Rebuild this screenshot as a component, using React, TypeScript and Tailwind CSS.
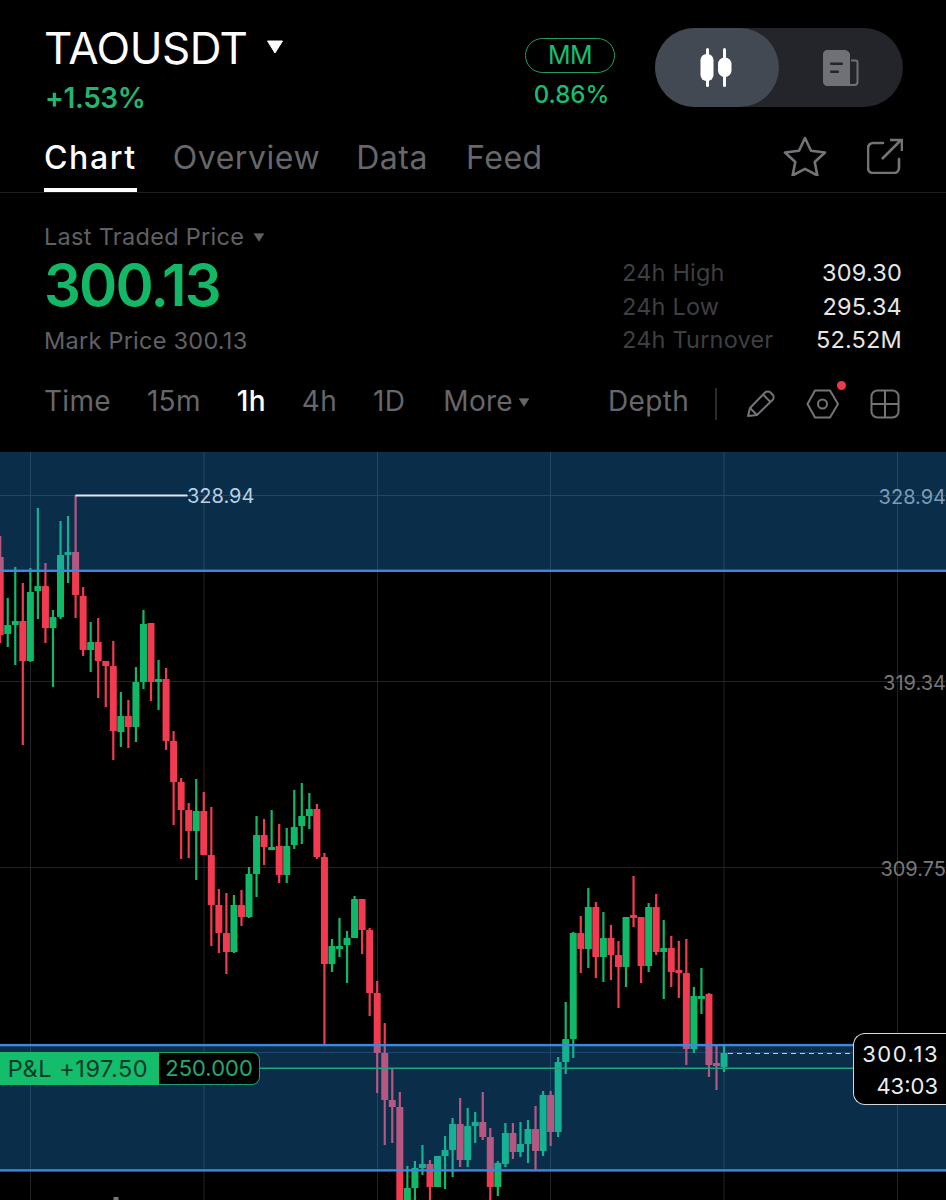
const font = "[font-family:Inter,'Noto_Sans',sans-serif]";

// wick top, wick bottom, body top, body bottom, colour
type Candle = [number, number, number, number, "r" | "g"];

const candles: Candle[] = [
  [536, 643, 557, 635, "r"], [598, 647, 625, 634, "g"], [567, 665, 621, 625, "g"], [583, 745, 621, 661, "r"],
  [568, 662, 592, 661, "g"], [508, 619, 586, 591, "g"], [563, 643, 586, 628, "r"], [610, 687, 617, 628, "g"],
  [521, 619, 555, 617, "g"], [516, 583, 552, 555, "g"], [495, 618, 552, 595, "r"], [587, 656, 596, 650, "r"],
  [622, 672, 642, 650, "g"], [618, 698, 642, 661, "r"], [661, 707, 661, 666, "r"], [641, 760, 666, 731, "r"],
  [692, 747, 716, 732, "g"], [700, 748, 716, 727, "r"], [667, 742, 682, 727, "g"], [610, 689, 624, 682, "g"],
  [623, 701, 623, 682, "r"], [660, 710, 679, 682, "g"], [668, 750, 679, 741, "r"], [731, 825, 741, 782, "r"],
  [778, 859, 782, 810, "r"], [803, 858, 810, 831, "r"], [779, 880, 811, 831, "g"], [792, 855, 811, 855, "r"],
  [807, 946, 855, 905, "r"], [889, 953, 905, 933, "r"], [893, 974, 933, 952, "r"], [895, 953, 905, 952, "g"],
  [890, 926, 905, 917, "r"], [867, 918, 874, 917, "g"], [816, 897, 835, 874, "g"], [819, 865, 835, 847, "r"],
  [810, 849, 847, 849, "g"], [824, 883, 846, 875, "r"], [828, 883, 846, 875, "g"], [790, 849, 827, 845, "g"],
  [783, 844, 816, 826, "g"], [793, 829, 809, 816, "g"], [804, 859, 809, 857, "r"], [853, 1045, 857, 964, "r"],
  [939, 972, 946, 964, "g"], [918, 957, 946, 947, "g"], [931, 983, 938, 945, "g"], [896, 938, 899, 938, "g"],
  [899, 954, 899, 930, "r"], [928, 1016, 930, 993, "r"], [981, 1093, 993, 1053, "r"], [1023, 1145, 1053, 1100, "r"],
  [1069, 1143, 1100, 1107, "r"], [1092, 1200, 1107, 1200, "r"], [1166, 1200, 1188, 1200, "g"], [1161, 1200, 1168, 1188, "g"],
  [1145, 1175, 1164, 1168, "g"], [1160, 1200, 1164, 1187, "r"], [1156, 1187, 1156, 1187, "g"], [1136, 1189, 1150, 1156, "g"],
  [1118, 1177, 1124, 1150, "g"], [1098, 1167, 1124, 1160, "r"], [1108, 1167, 1126, 1160, "g"], [1112, 1143, 1122, 1126, "g"],
  [1092, 1140, 1122, 1137, "r"], [1128, 1200, 1137, 1187, "r"], [1161, 1196, 1163, 1187, "g"], [1123, 1167, 1133, 1164, "g"],
  [1123, 1159, 1133, 1152, "r"], [1122, 1157, 1144, 1152, "g"], [1120, 1163, 1129, 1144, "g"], [1106, 1170, 1129, 1151, "r"],
  [1091, 1156, 1095, 1151, "g"], [1091, 1146, 1095, 1132, "r"], [1057, 1137, 1062, 1132, "g"], [1002, 1074, 1039, 1062, "g"],
  [932, 1058, 933, 1039, "g"], [916, 973, 933, 949, "r"], [888, 968, 907, 949, "g"], [902, 978, 907, 957, "r"],
  [912, 982, 938, 957, "g"], [925, 980, 938, 955, "r"], [941, 1008, 955, 967, "r"], [917, 987, 917, 967, "g"],
  [876, 927, 915, 917, "r"], [917, 983, 917, 966, "r"], [903, 972, 907, 966, "g"], [894, 955, 907, 952, "r"],
  [920, 999, 948, 952, "g"], [936, 987, 948, 972, "r"], [941, 998, 970, 972, "r"], [939, 1065, 973, 1049, "r"],
  [987, 1053, 996, 1049, "g"], [968, 1014, 996, 998, "g"], [993, 1077, 994, 1065, "r"], [1046, 1090, 1063, 1064, "r"],
  [1044, 1072, 1053, 1067, "g"],
];

function Triangle({ className }: { className: string }) {
  return (
    <svg viewBox="0 0 18 14" className={className}>
      <path d="M1.5 1h15L9 13z" fill="currentColor" stroke="currentColor" strokeLinejoin="round" />
    </svg>
  );
}

function CandleIcon() {
  return (
    <svg width="34" height="40" viewBox="0 0 34 40" fill="white">
      <rect x="6" y="0" width="3" height="39" rx="1.5" />
      <rect x="0.5" y="6" width="13" height="27" rx="6" />
      <rect x="23" y="0" width="3" height="39" rx="1.5" />
      <rect x="18" y="9.5" width="13.5" height="19.5" rx="6.5" />
    </svg>
  );
}

function NewsIcon() {
  return (
    <svg width="36" height="36" viewBox="0 0 36 36" fill="none">
      <path d="M4 0h17c3 0 6 2 6 5v31H4c-2 0-4-2-4-4V4c0-2 2-4 4-4z" fill="#6f7177" />
      <path d="M28 10.500h5a1.500 1.500 0 0 1 1.500 1.500v20c0 2-1.500 3-3 3H27" stroke="#6f7177" strokeWidth="2" />
      <rect x="7" y="12.500" width="13" height="2.500" rx="1" fill="#23252a" />
      <rect x="7" y="20.500" width="9" height="2.500" rx="1" fill="#23252a" />
    </svg>
  );
}

function Chart() {
  const grid = "#222326";
  return (
    <svg viewBox="0 452 946 748" className="block h-full w-full">
      {[30, 203.5, 377, 550, 723.5, 897].map((x) => (
        <rect key={x} x={x} y={452} width={1} height={748} fill={grid} />
      ))}
      {[495, 681, 867, 1052].map((y) => (
        <rect key={y} x={0} y={y} width={946} height={1} fill={grid} />
      ))}
      {candles.map(([wt, wb, bt, bb, c], i) => {
        const x = i * 7.54 + 0.2;
        const fill = c === "r" ? "#f23b50" : "#10b968";
        return (
          <g key={i} fill={fill}>
            <rect x={x - 1.1} y={wt} width={2.2} height={wb - wt} />
            <rect x={x - 3.5} y={bt} width={7} height={Math.max(bb - bt, 3)} rx={0.6} />
          </g>
        );
      })}
      <rect x={113.5} y={1197} width={5} height={3} fill="#777" />
      <rect x={0} y={452} width={946} height={118} fill="#24a0ff" fillOpacity={0.29} />
      <rect x={0} y={1045} width={946} height={126} fill="#24a0ff" fillOpacity={0.29} />
      <rect x={0} y={569.6} width={946} height={2.4} fill="#3f87dc" />
      <rect x={0} y={1043.9} width={946} height={2.4} fill="#3f87dc" />
      <rect x={0} y={1169.2} width={946} height={2.4} fill="#3f87dc" />
      <rect x={0} y={1067.5} width={860} height={1.5} fill="#1fa47c" />
      <path d="M728 1053.5H854" stroke="#b7cad8" strokeWidth={1} strokeDasharray="5 4" />
      <rect x={75.5} y={494.5} width={112} height={2} fill="#dbe8f2" />
    </svg>
  );
}

function Stat({ label, value }: { label: string; value: string }) {
  return (
    <div className="flex h-[33.5px] items-center justify-between">
      <span className="text-[#3e3f43]">{label}</span>
      <span className="text-[#e4e5e7]">{value}</span>
    </div>
  );
}

export default function App() {
  return (
    <div className={`${font} h-[1200px] w-[946px] overflow-hidden bg-black text-white`}>
      {/* symbol row */}
      <div className="flex h-[135px] pr-[43px] pl-[44px]">
        <div className="flex-1">
          <div className="flex h-[88px] items-center pt-[7px]">
            <span className="text-[44px] leading-none tracking-[-0.5px]">TAOUSDT</span>
            <Triangle className="mt-[-1px] ml-[18px] h-[14px] w-[20px] text-white" />
          </div>
          <div className="mt-[-6px] ml-[1px] text-[28px] leading-[32px] font-semibold tracking-[-0.4px] text-[#26b56f]">+1.53%</div>
        </div>
        <div className="mt-[38px] mr-[40px] flex w-[90px] flex-col items-center">
          <div className="flex h-[35px] w-[90px] items-center justify-center rounded-full border border-[#1f9f66] text-[25px] tracking-[-0.5px] text-[#17bd72]">
            MM
          </div>
          <div className="mt-[7px] ml-[3px] text-[24px] leading-[30px] font-medium text-[#17bd72]">0.86%</div>
        </div>
        <div className="mt-[28px] flex h-[79px] w-[248px] rounded-full bg-[#23252a]">
          <div className="flex w-[124px] items-center justify-center rounded-full bg-[#434952]">
            <CandleIcon />
          </div>
          <div className="flex flex-1 items-center justify-center">
            <NewsIcon />
          </div>
        </div>
      </div>

      {/* tabs */}
      <div className="flex h-[58px] items-start justify-between border-b border-[#1f1f21] pr-[43px] pl-[44px]">
        <div className="flex gap-[36px] text-[32px] leading-[46px] tracking-[0.55px] text-[#66676b]">
          <div className="h-[57px] border-b-4 border-white font-medium tracking-[1.6px] text-white">Chart</div>
          <div>Overview</div>
          <div>Data</div>
          <div className="ml-[2px]">Feed</div>
        </div>
        <div className="flex items-center gap-[40px] pt-[1px] text-[#737478]">
          <svg width="44" height="40" viewBox="0 0 44 40" fill="none" stroke="currentColor" strokeWidth="2.6" strokeLinejoin="round">
            <path d="M22 2l6 12.800 14 1.700-10.300 9.500 2.700 13.500L22 32.800 9.600 39.500l2.700-13.500L2 16.500l14-1.700z" />
          </svg>
          <svg width="36" height="36" viewBox="0 0 36 36" fill="none" stroke="currentColor" strokeWidth="2.6" strokeLinecap="round">
            <path d="M16 5H6a5 5 0 0 0-5 5v20a5 5 0 0 0 5 5h21a5 5 0 0 0 5-5V21" />
            <path d="M15 21L34 2M23 2h12v11" strokeLinecap="butt" />
          </svg>
        </div>
      </div>

      {/* price summary */}
      <div className="flex h-[170px] pt-[29px] pr-[44px] pl-[44px]">
        <div className="flex-1">
          <div className="flex items-center text-[23.5px] leading-[30px] tracking-[0.3px] text-[#606165]">
            Last Traded Price
            <Triangle className="ml-[9px] h-[9px] w-[12px] text-[#606165]" />
          </div>
          <div className="mt-[-2px] text-[58px] leading-[70px] font-semibold tracking-[-1.8px] text-[#12b866]">300.13</div>
          <div className="mt-[5px] text-[23.5px] leading-[32px] tracking-[0.25px] text-[#606165]">Mark Price 300.13</div>
        </div>
        <div className="mt-[34px] w-[280px] text-[23.5px] leading-none tracking-[0.2px]">
          <Stat label="24h High" value="309.30" />
          <Stat label="24h Low" value="295.34" />
          <Stat label="24h Turnover" value="52.52M" />
        </div>
      </div>

      {/* interval row */}
      <div className="flex h-[89px] items-start pt-[18px] pr-[46px] pl-[44px] text-[28px] leading-[40px] text-[#66676b]">
        <div className="flex items-center gap-[36px] tracking-[0.3px]">
          <span>Time</span>
          <span>15m</span>
          <span className="font-medium text-white">1h</span>
          <span>4h</span>
          <span>1D</span>
          <span className="ml-[2px] flex items-center gap-[5px]">
            More
            <Triangle className="mt-[3px] h-[9px] w-[12px]" />
          </span>
        </div>
        <div className="ml-auto flex items-center text-[#737478]">
          <span className="tracking-[0.3px] text-[#66676b]">Depth</span>
          <div className="mt-[6px] mr-[29px] ml-[26px] flex h-[32px] w-[2px] bg-[#2a2b2d]" />
          <div className="mt-[5px] flex items-center">
            <svg width="30" height="30" viewBox="0 0 30 30" fill="none" stroke="currentColor" strokeWidth="2" strokeLinejoin="round">
              <path d="M2 27l2-8L19 3.500c1.500-1.500 4-1.500 5.500 0l2 2c1.500 1.500 1.500 4 0 5.500L11 26z" />
              <path d="M4 19l7 7M17 5.500l7.500 7.500" />
            </svg>
            <div className="relative ml-[30px]">
              <svg className="block" width="34" height="30" viewBox="0 0 34 30" fill="none" stroke="currentColor" strokeWidth="2" strokeLinejoin="round">
                <path d="M9 1.500h15L32 15l-8 13.500H9L1.500 15z" />
                <circle cx="16.500" cy="15" r="4.500" />
              </svg>
              <div className="absolute top-[-8px] right-[-6px] h-[9px] w-[9px] rounded-full bg-[#f0384e]" />
            </div>
            <svg className="ml-[30px]" width="30" height="30" viewBox="0 0 30 30" fill="none" stroke="currentColor" strokeWidth="2">
              <rect x="1.500" y="1.500" width="27" height="27" rx="6" />
              <path d="M15 1.500v27M1.500 15h27" />
            </svg>
          </div>
        </div>
      </div>

      {/* chart */}
      <div className="relative h-[748px]">
        <Chart />
        <span className="absolute top-[32px] left-[187px] text-[20px] leading-[24px] text-[#b9cfe0]">328.94</span>
        <span className="absolute top-[33px] right-[0px] text-[20px] leading-[24px] text-[#7b9cb8]">328.94</span>
        <span className="absolute top-[219px] right-[0px] text-[20px] leading-[24px] text-[#77787b]">319.34</span>
        <span className="absolute top-[405px] right-[0px] text-[20px] leading-[24px] text-[#77787b]">309.75</span>

        <div className="absolute top-[600px] left-0 flex h-[33px] leading-[33px]">
          <div className="flex w-[159px] justify-center bg-[#14bd6c] pr-[3px] text-[23.5px] tracking-[0.55px] text-[#0c3a28]">P&amp;L +197.50</div>
          <div className="flex w-[101px] justify-center rounded-r-[8px] border border-l-0 border-[#1f9a6a] bg-black text-[22px] leading-[31px] text-[#22a874]">
            250.000
          </div>
        </div>

        <div className="absolute top-[581px] right-0 h-[72px] w-[93px] rounded-l-[12px] border border-r-0 border-[#d4d6d8] bg-black pt-[4px] pr-[8px] text-right text-[22px] leading-[32px] text-[#eceef0]">
          <div className="mr-[-1px] tracking-[1.5px]">300.13</div>
          <div>43:03</div>
        </div>
      </div>
    </div>
  );
}
